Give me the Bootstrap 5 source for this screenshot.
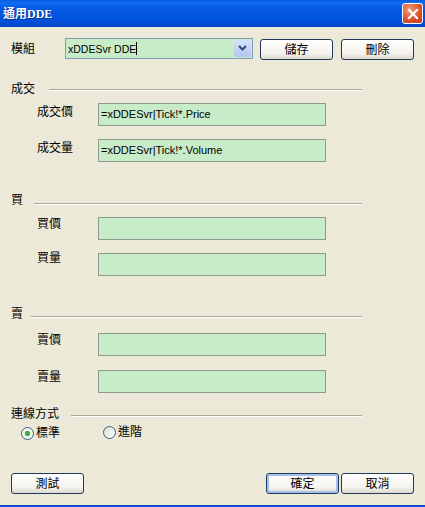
<!DOCTYPE html>
<html lang="zh-Hant">
  <head>
    <meta charset="UTF-8" />
    <meta name="viewport" content="width=device-width, initial-scale=1.0" />
    <title>通用DDE</title>
    <link
      href="https://cdn.jsdelivr.net/npm/bootstrap@5.3.0/dist/css/bootstrap.min.css"
      rel="stylesheet"
    />
    <style>
      html, body {
        height: 507px;
        overflow: hidden;
      }
      body {
        background: #ece9d8;
        font-family: "Liberation Sans", "Noto Sans CJK TC", sans-serif;
        font-size: 12px;
        line-height: 14px;
        color: #000;
      }
      .dlg {
        height: 507px;
        border-bottom: 2px solid #0b4fd0;
      }
      .dlg-title {
        height: 27px;
        padding: 0 2px 0 3px;
        background: linear-gradient(180deg, #0a5bdc 0%, #0f6cf0 10%, #0458e2 35%, #0052dd 75%, #0344c4 100%);
        color: #fff;
        font-family: "Liberation Serif", "Noto Sans CJK TC", serif;
        font-weight: 700;
        font-size: 12px;
        text-shadow: 1px 1px 0 #0a2f8a;
      }
      .close-btn {
        width: 21px;
        height: 21px;
        border: 1px solid #fff;
        border-radius: 3px;
        background: radial-gradient(circle at 35% 30%, #ee9a7a, #d9512c 60%, #bd3a15);
      }
      .dlg-body {
        padding: 11px 11px 0 11px;
      }
      .top-row {
        height: 22px;
      }
      .field-label {
        width: 54px;
        margin-top: 4px;
      }
      .combo {
        width: 188px;
        height: 21px;
        margin-right: 7px;
        border: 1px solid #7f9db9;
        background: #c8ecc8;
        padding: 1px 1px 1px 2px;
        font-size: 10.5px;
      }
      .combo-arrow {
        width: 17px;
        height: 17px;
        border-radius: 2px;
        background: linear-gradient(180deg, #d6e1f8, #b2c6f0);
      }
      .caret {
        width: 1px;
        height: 13px;
        background: #000;
      }
      .xp-btn {
        width: 73px;
        height: 21px;
        padding: 0;
        border: 1px solid #1f3a5a;
        border-radius: 3px;
        background: linear-gradient(180deg, #fff 0%, #f4f3ee 70%, #dcd8cc 100%);
        font-size: 12px;
        line-height: 18px;
        color: #000;
      }
      .top-row .xp-btn {
        margin-top: 1px;
      }
      .xp-btn.is-default {
        box-shadow: inset 0 0 0 2px #a6c0ec;
      }
      .group-head {
        width: 351px;
        height: 14px;
      }
      .group-rule {
        height: 2px;
        background: #aca899;
        border-bottom: 1px solid #fff;
      }
      .head-deal { margin-top: 22px; }
      .head-deal .group-rule { margin: 7px 0 0 14px; }
      .head-buy { margin-top: 31px; }
      .head-buy .group-rule { margin: 10px 0 0 11px; }
      .head-sell { margin-top: 31px; }
      .head-sell .group-rule { margin: 9px 0 0 8px; }
      .head-link { margin-top: 14px; }
      .head-link .group-rule { margin: 8px 0 0 12px; }
      .row-item {
        margin-left: 26px;
        height: 23px;
      }
      .item-label {
        width: 61px;
      }
      .label-low { margin-top: 2px; }
      .label-high { margin-top: -2px; }
      .green-box {
        width: 228px;
        height: 23px;
        border: 1px solid #8f9a8f;
        background: #c8ecc8;
        padding-left: 2px;
        line-height: 21px;
        font-size: 11px;
      }
      .gap-deal { margin-top: 7px; }
      .gap-buy { margin-top: 10px; }
      .gap-sell { margin-top: 12px; }
      .gap-next { margin-top: 13px; }
      .gap-next-sell { margin-top: 14px; }
      .radio-row {
        margin: 4px 0 0 10px;
        height: 16px;
      }
      .radio-one {
        width: 82px;
      }
      .radio-two {
        margin-top: -2px;
      }
      .radio-dot {
        display: inline-block;
        width: 13px;
        height: 13px;
        margin-right: 2px;
        border: 1px solid #3a5f7a;
        border-radius: 50%;
        background: linear-gradient(135deg, #dcdcd0, #fff);
      }
      .radio-dot.on {
        background: radial-gradient(circle, #3fb13f 0 2.5px, #f4f4ee 3px);
      }
      .foot-row {
        margin-top: 32px;
      }
      .pair-btns {
        gap: 2px;
      }
    </style>
  </head>
  <body>
    <div class="dlg">
      <div class="dlg-title d-flex align-items-center justify-content-between">
        <span>通用DDE</span>
        <span class="close-btn d-flex align-items-center justify-content-center">
          <svg width="12" height="12" viewBox="0 0 12 12">
            <path d="M2 2 L10 10 M10 2 L2 10" stroke="#fff" stroke-width="2.2" stroke-linecap="square" />
          </svg>
        </span>
      </div>
      <div class="dlg-body">
        <div class="top-row d-flex align-items-start">
          <span class="field-label">模組</span>
          <div class="combo d-flex align-items-center">
            <span>xDDESvr DDE</span><span class="caret"></span>
            <span class="combo-arrow ms-auto d-flex align-items-center justify-content-center">
              <svg width="9" height="7" viewBox="0 0 9 7">
                <path d="M1 1 L4.5 4.5 L8 1" fill="none" stroke="#2d4a80" stroke-width="2" />
              </svg>
            </span>
          </div>
          <button class="xp-btn" type="button">儲存</button>
          <button class="xp-btn ms-2" type="button">刪除</button>
        </div>

        <div class="group-head head-deal d-flex align-items-start">
          <span>成交</span>
          <span class="group-rule flex-grow-1"></span>
        </div>
        <div class="row-item gap-deal d-flex align-items-start">
          <span class="item-label label-low">成交價</span>
          <div class="green-box">=xDDESvr|Tick!*.Price</div>
        </div>
        <div class="row-item gap-next d-flex align-items-start">
          <span class="item-label label-low">成交量</span>
          <div class="green-box">=xDDESvr|Tick!*.Volume</div>
        </div>

        <div class="group-head head-buy d-flex align-items-start">
          <span>買</span>
          <span class="group-rule flex-grow-1"></span>
        </div>
        <div class="row-item gap-buy d-flex align-items-start">
          <span class="item-label">買價</span>
          <div class="green-box"></div>
        </div>
        <div class="row-item gap-next d-flex align-items-start">
          <span class="item-label label-high">買量</span>
          <div class="green-box"></div>
        </div>

        <div class="group-head head-sell d-flex align-items-start">
          <span>賣</span>
          <span class="group-rule flex-grow-1"></span>
        </div>
        <div class="row-item gap-sell d-flex align-items-start">
          <span class="item-label">賣價</span>
          <div class="green-box"></div>
        </div>
        <div class="row-item gap-next-sell d-flex align-items-start">
          <span class="item-label">賣量</span>
          <div class="green-box"></div>
        </div>

        <div class="group-head head-link d-flex align-items-start">
          <span>連線方式</span>
          <span class="group-rule flex-grow-1"></span>
        </div>
        <div class="radio-row d-flex align-items-center">
          <span class="radio-one d-flex align-items-center"><span class="radio-dot on"></span>標準</span>
          <span class="radio-two d-flex align-items-center"><span class="radio-dot"></span>進階</span>
        </div>

        <div class="foot-row d-flex justify-content-between">
          <button class="xp-btn" type="button">測試</button>
          <div class="pair-btns d-flex">
            <button class="xp-btn is-default" type="button">確定</button>
            <button class="xp-btn" type="button">取消</button>
          </div>
        </div>
      </div>
    </div>
    <script src="https://cdn.jsdelivr.net/npm/bootstrap@5.3.0/dist/js/bootstrap.bundle.min.js"></script>
  </body>
</html>
